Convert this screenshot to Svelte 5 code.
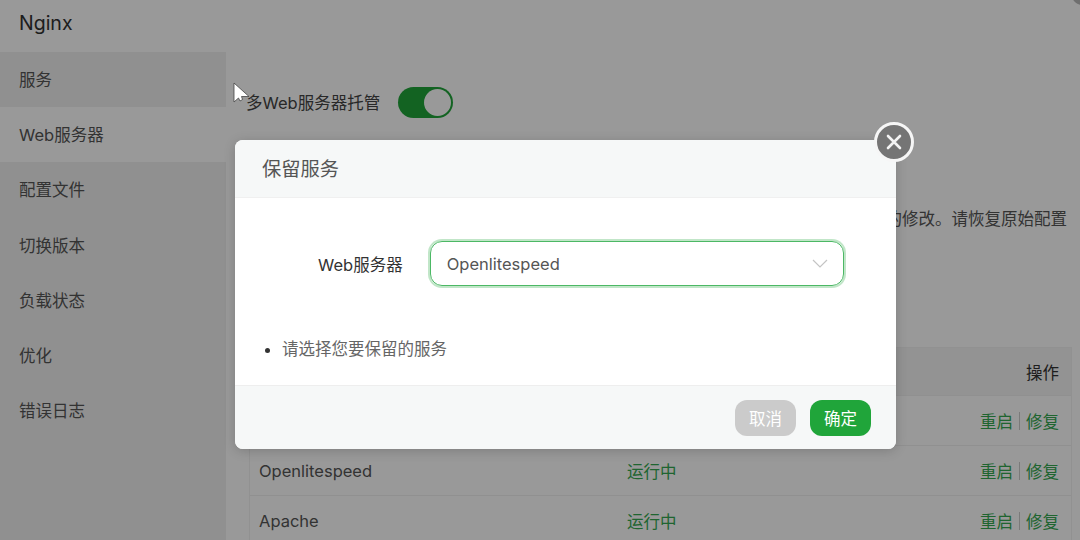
<script>
  const menu = ['服务', 'Web服务器', '配置文件', '切换版本', '负载状态', '优化', '错误日志'];
  const rows = ['Nginx', 'Openlitespeed', 'Apache'];
</script>

<div class="page">
  <header class="title">Nginx</header>
  <div class="body">
    <nav class="side">
      {#each menu as item, i}
        <div class="tab" class:active={i === 1}>{item}</div>
      {/each}
    </nav>
    <main class="content">
      <div class="host">
        <span>多Web服务器托管</span>
        <span class="switch"><i></i></span>
      </div>
      <p class="notice">检测到您对配置文件进行了手动的修改。请恢复原始配置</p>
      <div class="table">
        <div class="row head">
          <span class="name">服务</span>
          <span class="state">状态</span>
          <span class="ops">操作</span>
        </div>
        {#each rows as row}
          <div class="row">
            <span class="name">{row}</span>
            <span class="state green">运行中</span>
            <span class="ops green"><a>重启</a><em></em><a>修复</a></span>
          </div>
        {/each}
      </div>
    </main>
  </div>

  <div class="shade"></div>
  <span class="corner"></span>

  <svg class="cursor" width="20" height="26" viewBox="0 0 20 26">
    <path d="M1 1 L1 20 L5.5 16 L7 19 L9.5 17.5 L8.5 14.5 L16 14.5 Z" fill="#fff" stroke="#444" stroke-width="0.8" />
  </svg>

  <section class="modal">
    <button class="close" aria-label="关闭">
      <svg width="18" height="18" viewBox="0 0 18 18">
        <path d="M3 3 L15 15 M15 3 L3 15" stroke="#f4f4f4" stroke-width="2.6" stroke-linecap="round" />
      </svg>
    </button>
    <div class="modal-head">保留服务</div>
    <div class="modal-body">
      <div class="field">
        <label for="web">Web服务器</label>
        <div class="select" id="web">
          <span>Openlitespeed</span>
          <svg width="16" height="9" viewBox="0 0 16 9">
            <path d="M1 1 L8 8 L15 1" fill="none" stroke="#c4c4c4" stroke-width="1.2" />
          </svg>
        </div>
      </div>
      <ul class="tips">
        <li>请选择您要保留的服务</li>
      </ul>
    </div>
    <div class="modal-foot">
      <button class="btn cancel">取消</button>
      <button class="btn ok">确定</button>
    </div>
  </section>
</div>

<style>
  :global(body) {
    margin: 0;
    overflow: hidden;
  }

  .page {
    position: relative;
    width: 1080px;
    height: 540px;
    overflow: hidden;
    background: #fff;
    color: #333;
    font-family: Inter, "Noto Sans CJK SC", sans-serif;
    font-size: 16.5px;
  }

  .title {
    height: 52px;
    box-sizing: border-box;
    padding: 11px 19px 0;
    font-size: 19.5px;
    line-height: 24px;
    color: #333;
    background: #fff;
  }

  .body {
    display: flex;
    height: 488px;
  }

  .side {
    width: 226px;
    flex: none;
    background: #f0f0f0;
  }

  .tab {
    height: 55.2px;
    line-height: 56.5px;
    padding-left: 19px;
    color: #555;
  }

  .tab.active {
    background: #fff;
  }

  .content {
    flex: 1;
    min-width: 0;
    padding: 0 8px 0 23px;
  }

  .host {
    display: flex;
    align-items: center;
    gap: 18px;
    height: 32px;
    margin-top: 34px;
    margin-left: -3px;
    color: #444;
  }

  .switch {
    display: block;
    position: relative;
    width: 55px;
    height: 31px;
    border-radius: 16px;
    background: #20a53a;
  }

  .switch i {
    position: absolute;
    right: 2px;
    top: 2px;
    width: 27px;
    height: 27px;
    border-radius: 50%;
    background: #fff;
  }

  .notice {
    margin: 89px 5px 0 0;
    height: 24px;
    line-height: 24px;
    white-space: nowrap;
    direction: rtl;
    color: #555;
  }

  .table {
    margin-top: 116px;
    border: 1px solid #f2f2f2;
    border-bottom: 0;
  }

  .row {
    display: flex;
    align-items: center;
    height: 49px;
    padding: 0 12px 0 9px;
    border-bottom: 1px solid #f0f0f0;
  }

  .row.head {
    height: 47px;
    background: #f5f5f5;
  }

  .name {
    width: 368px;
    color: #555;
  }

  .state {
    flex: 1;
  }

  .green {
    color: #34a850;
  }

  .head .name,
  .head .state,
  .head .ops {
    color: #333;
  }

  .ops {
    display: flex;
    align-items: center;
  }

  .ops em {
    width: 1px;
    height: 18px;
    margin: 0 6px;
    background: #ccc;
  }

  .shade {
    position: absolute;
    inset: 0;
    background: rgba(0, 0, 0, 0.4);
  }

  .corner {
    position: absolute;
    right: -12px;
    top: -15px;
    width: 20px;
    height: 20px;
    border-radius: 50%;
    background: #6f6f6f;
  }

  .cursor {
    position: absolute;
    left: 233px;
    top: 82px;
  }

  .modal {
    position: absolute;
    left: 235px;
    top: 140px;
    width: 661px;
    height: 309px;
    display: flex;
    flex-direction: column;
    border-radius: 8px;
    background: #fff;
    box-shadow: 0 2px 12px rgba(0, 0, 0, 0.18);
  }

  .close {
    position: absolute;
    right: -18px;
    top: -18px;
    display: flex;
    align-items: center;
    justify-content: center;
    box-sizing: border-box;
    width: 40px;
    height: 40px;
    padding: 0;
    border: 3px solid #f6f6f6;
    border-radius: 50%;
    background: #757575;
  }

  .modal-head {
    height: 58px;
    box-sizing: border-box;
    padding-left: 27px;
    line-height: 58px;
    font-size: 19.25px;
    color: #555;
    background: #f6f8f8;
    border-bottom: 1px solid #f0f0f0;
    border-radius: 8px 8px 0 0;
  }

  .modal-body {
    flex: 1;
  }

  .field {
    display: flex;
    align-items: center;
    gap: 27px;
    margin-top: 43px;
    padding-left: 83px;
  }

  .field label {
    color: #333;
  }

  .select {
    display: flex;
    align-items: center;
    justify-content: space-between;
    box-sizing: border-box;
    width: 414px;
    height: 45px;
    padding: 0 15px 0 16px;
    border: 1px solid #4cb865;
    border-radius: 12px;
    box-shadow: 0 0 0 2px rgba(32, 165, 58, 0.28);
    color: #555;
  }

  .tips {
    margin: 51px 0 0;
    padding: 0 0 0 47px;
    line-height: 24px;
    color: #666;
  }

  .tips li::marker {
    color: #333;
  }

  .modal-foot {
    display: flex;
    justify-content: flex-end;
    align-items: center;
    gap: 14px;
    height: 63px;
    padding-right: 25px;
    background: #f6f8f8;
    border-top: 1px solid #eee;
    border-radius: 0 0 8px 8px;
  }

  .btn {
    width: 61px;
    height: 36px;
    padding: 0;
    border: 0;
    border-radius: 12px;
    font: inherit;
    color: #fff;
  }

  .cancel {
    background: #cbcbcb;
  }

  .ok {
    background: #20a53a;
  }
</style>
